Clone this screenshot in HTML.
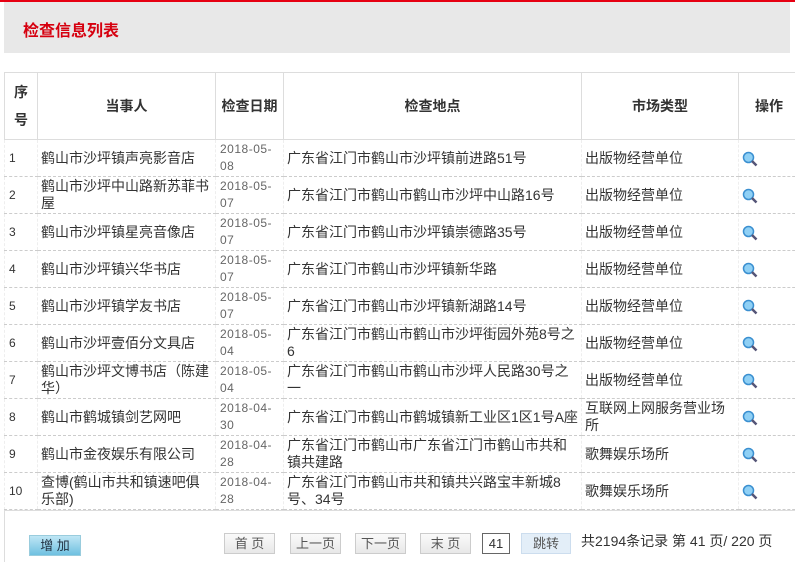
<!DOCTYPE html>
<html><head><meta charset="utf-8"><style>
*{margin:0;padding:0;box-sizing:border-box}
body{width:795px;height:562px;overflow:hidden;background:#fff;font-family:"Liberation Sans","Noto Sans CJK SC",sans-serif;font-size:14px;color:#333;position:relative}
.top{position:absolute;left:0;top:0;width:795px;height:2px;background:#e60012}
.hd{position:absolute;left:4px;top:2px;width:786px;height:51px;background:#e8e8e8}
.hd span{position:absolute;left:19px;top:15px;color:#d6000f;font-size:16px;font-weight:bold}
table{position:absolute;left:4px;top:72px;border-collapse:collapse;table-layout:fixed;width:795px}
th{height:67px;border:1px solid #ddd;font-weight:bold;font-size:14px;color:#333;text-align:center}
td{height:37px;max-height:37px;border-bottom:1px dashed #ccc;border-left:1px dashed #eee;font-size:14px;line-height:17px;padding:0 3px;vertical-align:middle;overflow:hidden}
td.d{color:#666;font-size:12px;line-height:17px;letter-spacing:0.5px;padding-left:4px}
td.n{font-size:12px;padding-left:4px}
.ic{display:inline-block;width:16px;height:16px;vertical-align:middle}
.foot{position:absolute;left:4px;top:510px;width:791px;height:52px;border-left:1px solid #ddd;border-top:1px solid #ddd}
.b{position:absolute;height:21px;top:22px;border:1px solid #ccc;background:linear-gradient(#fafafa,#e8e8e8);font-size:13px;color:#555;text-align:center;line-height:19px;white-space:nowrap;overflow:hidden}
</style></head><body>
<div class="top"></div>
<div class="hd"><span>检查信息列表</span></div>
<table>
<colgroup><col style="width:33px"><col style="width:178px"><col style="width:68px"><col style="width:298px"><col style="width:157px"><col style="width:61px"></colgroup>
<tr><th style="line-height:28px">序<br>号</th><th>当事人</th><th>检查日期</th><th>检查地点</th><th>市场类型</th><th>操作</th></tr>
<tr><td class="n">1</td><td>鹤山市沙坪镇声亮影音店</td><td class="d">2018-05-08</td><td>广东省江门市鹤山市沙坪镇前进路51号</td><td>出版物经营单位</td><td><svg class="ic" viewBox="0 0 16 16"><circle cx="6.5" cy="6.5" r="5" fill="#8fd0f5" stroke="#3a8fd0" stroke-width="1.5"/><path d="M10 10l4.5 4.5" stroke="#557" stroke-width="2.5"/></svg></td></tr>
<tr><td class="n">2</td><td>鹤山市沙坪中山路新苏菲书屋</td><td class="d">2018-05-07</td><td>广东省江门市鹤山市鹤山市沙坪中山路16号</td><td>出版物经营单位</td><td><svg class="ic" viewBox="0 0 16 16"><circle cx="6.5" cy="6.5" r="5" fill="#8fd0f5" stroke="#3a8fd0" stroke-width="1.5"/><path d="M10 10l4.5 4.5" stroke="#557" stroke-width="2.5"/></svg></td></tr>
<tr><td class="n">3</td><td>鹤山市沙坪镇星亮音像店</td><td class="d">2018-05-07</td><td>广东省江门市鹤山市沙坪镇崇德路35号</td><td>出版物经营单位</td><td><svg class="ic" viewBox="0 0 16 16"><circle cx="6.5" cy="6.5" r="5" fill="#8fd0f5" stroke="#3a8fd0" stroke-width="1.5"/><path d="M10 10l4.5 4.5" stroke="#557" stroke-width="2.5"/></svg></td></tr>
<tr><td class="n">4</td><td>鹤山市沙坪镇兴华书店</td><td class="d">2018-05-07</td><td>广东省江门市鹤山市沙坪镇新华路</td><td>出版物经营单位</td><td><svg class="ic" viewBox="0 0 16 16"><circle cx="6.5" cy="6.5" r="5" fill="#8fd0f5" stroke="#3a8fd0" stroke-width="1.5"/><path d="M10 10l4.5 4.5" stroke="#557" stroke-width="2.5"/></svg></td></tr>
<tr><td class="n">5</td><td>鹤山市沙坪镇学友书店</td><td class="d">2018-05-07</td><td>广东省江门市鹤山市沙坪镇新湖路14号</td><td>出版物经营单位</td><td><svg class="ic" viewBox="0 0 16 16"><circle cx="6.5" cy="6.5" r="5" fill="#8fd0f5" stroke="#3a8fd0" stroke-width="1.5"/><path d="M10 10l4.5 4.5" stroke="#557" stroke-width="2.5"/></svg></td></tr>
<tr><td class="n">6</td><td>鹤山市沙坪壹佰分文具店</td><td class="d">2018-05-04</td><td>广东省江门市鹤山市鹤山市沙坪街园外苑8号之6</td><td>出版物经营单位</td><td><svg class="ic" viewBox="0 0 16 16"><circle cx="6.5" cy="6.5" r="5" fill="#8fd0f5" stroke="#3a8fd0" stroke-width="1.5"/><path d="M10 10l4.5 4.5" stroke="#557" stroke-width="2.5"/></svg></td></tr>
<tr><td class="n">7</td><td>鹤山市沙坪文博书店（陈建华）</td><td class="d">2018-05-04</td><td>广东省江门市鹤山市鹤山市沙坪人民路30号之一</td><td>出版物经营单位</td><td><svg class="ic" viewBox="0 0 16 16"><circle cx="6.5" cy="6.5" r="5" fill="#8fd0f5" stroke="#3a8fd0" stroke-width="1.5"/><path d="M10 10l4.5 4.5" stroke="#557" stroke-width="2.5"/></svg></td></tr>
<tr><td class="n">8</td><td>鹤山市鹤城镇剑艺网吧</td><td class="d">2018-04-30</td><td>广东省江门市鹤山市鹤城镇新工业区1区1号A座</td><td>互联网上网服务营业场所</td><td><svg class="ic" viewBox="0 0 16 16"><circle cx="6.5" cy="6.5" r="5" fill="#8fd0f5" stroke="#3a8fd0" stroke-width="1.5"/><path d="M10 10l4.5 4.5" stroke="#557" stroke-width="2.5"/></svg></td></tr>
<tr><td class="n">9</td><td>鹤山市金夜娱乐有限公司</td><td class="d">2018-04-28</td><td>广东省江门市鹤山市广东省江门市鹤山市共和镇共建路</td><td>歌舞娱乐场所</td><td><svg class="ic" viewBox="0 0 16 16"><circle cx="6.5" cy="6.5" r="5" fill="#8fd0f5" stroke="#3a8fd0" stroke-width="1.5"/><path d="M10 10l4.5 4.5" stroke="#557" stroke-width="2.5"/></svg></td></tr>
<tr><td class="n">10</td><td>查博(鹤山市共和镇速吧俱乐部)</td><td class="d">2018-04-28</td><td>广东省江门市鹤山市共和镇共兴路宝丰新城8号、34号</td><td>歌舞娱乐场所</td><td><svg class="ic" viewBox="0 0 16 16"><circle cx="6.5" cy="6.5" r="5" fill="#8fd0f5" stroke="#3a8fd0" stroke-width="1.5"/><path d="M10 10l4.5 4.5" stroke="#557" stroke-width="2.5"/></svg></td></tr>
</table>
<div class="foot">
<div class="b" style="left:24px;top:24px;width:52px;background:linear-gradient(#bfe6f5,#6fc0e0);border-color:#9cd;color:#234">增 加</div>
<div class="b" style="left:219px;width:51px">首 页</div>
<div class="b" style="left:285px;width:51px">上一页</div>
<div class="b" style="left:350px;width:51px">下一页</div>
<div class="b" style="left:415px;width:51px">末 页</div>
<div class="b" style="left:477px;width:28px;background:#fff;border-color:#666;color:#333">41</div>
<div class="b" style="left:516px;width:50px;background:#e3eef8;border-color:#cde">跳转</div>
<div style="position:absolute;left:576px;top:20px;font-size:14px;color:#333;white-space:nowrap">共2194条记录 第 41 页/ 220 页</div>
</div>
</body></html>
